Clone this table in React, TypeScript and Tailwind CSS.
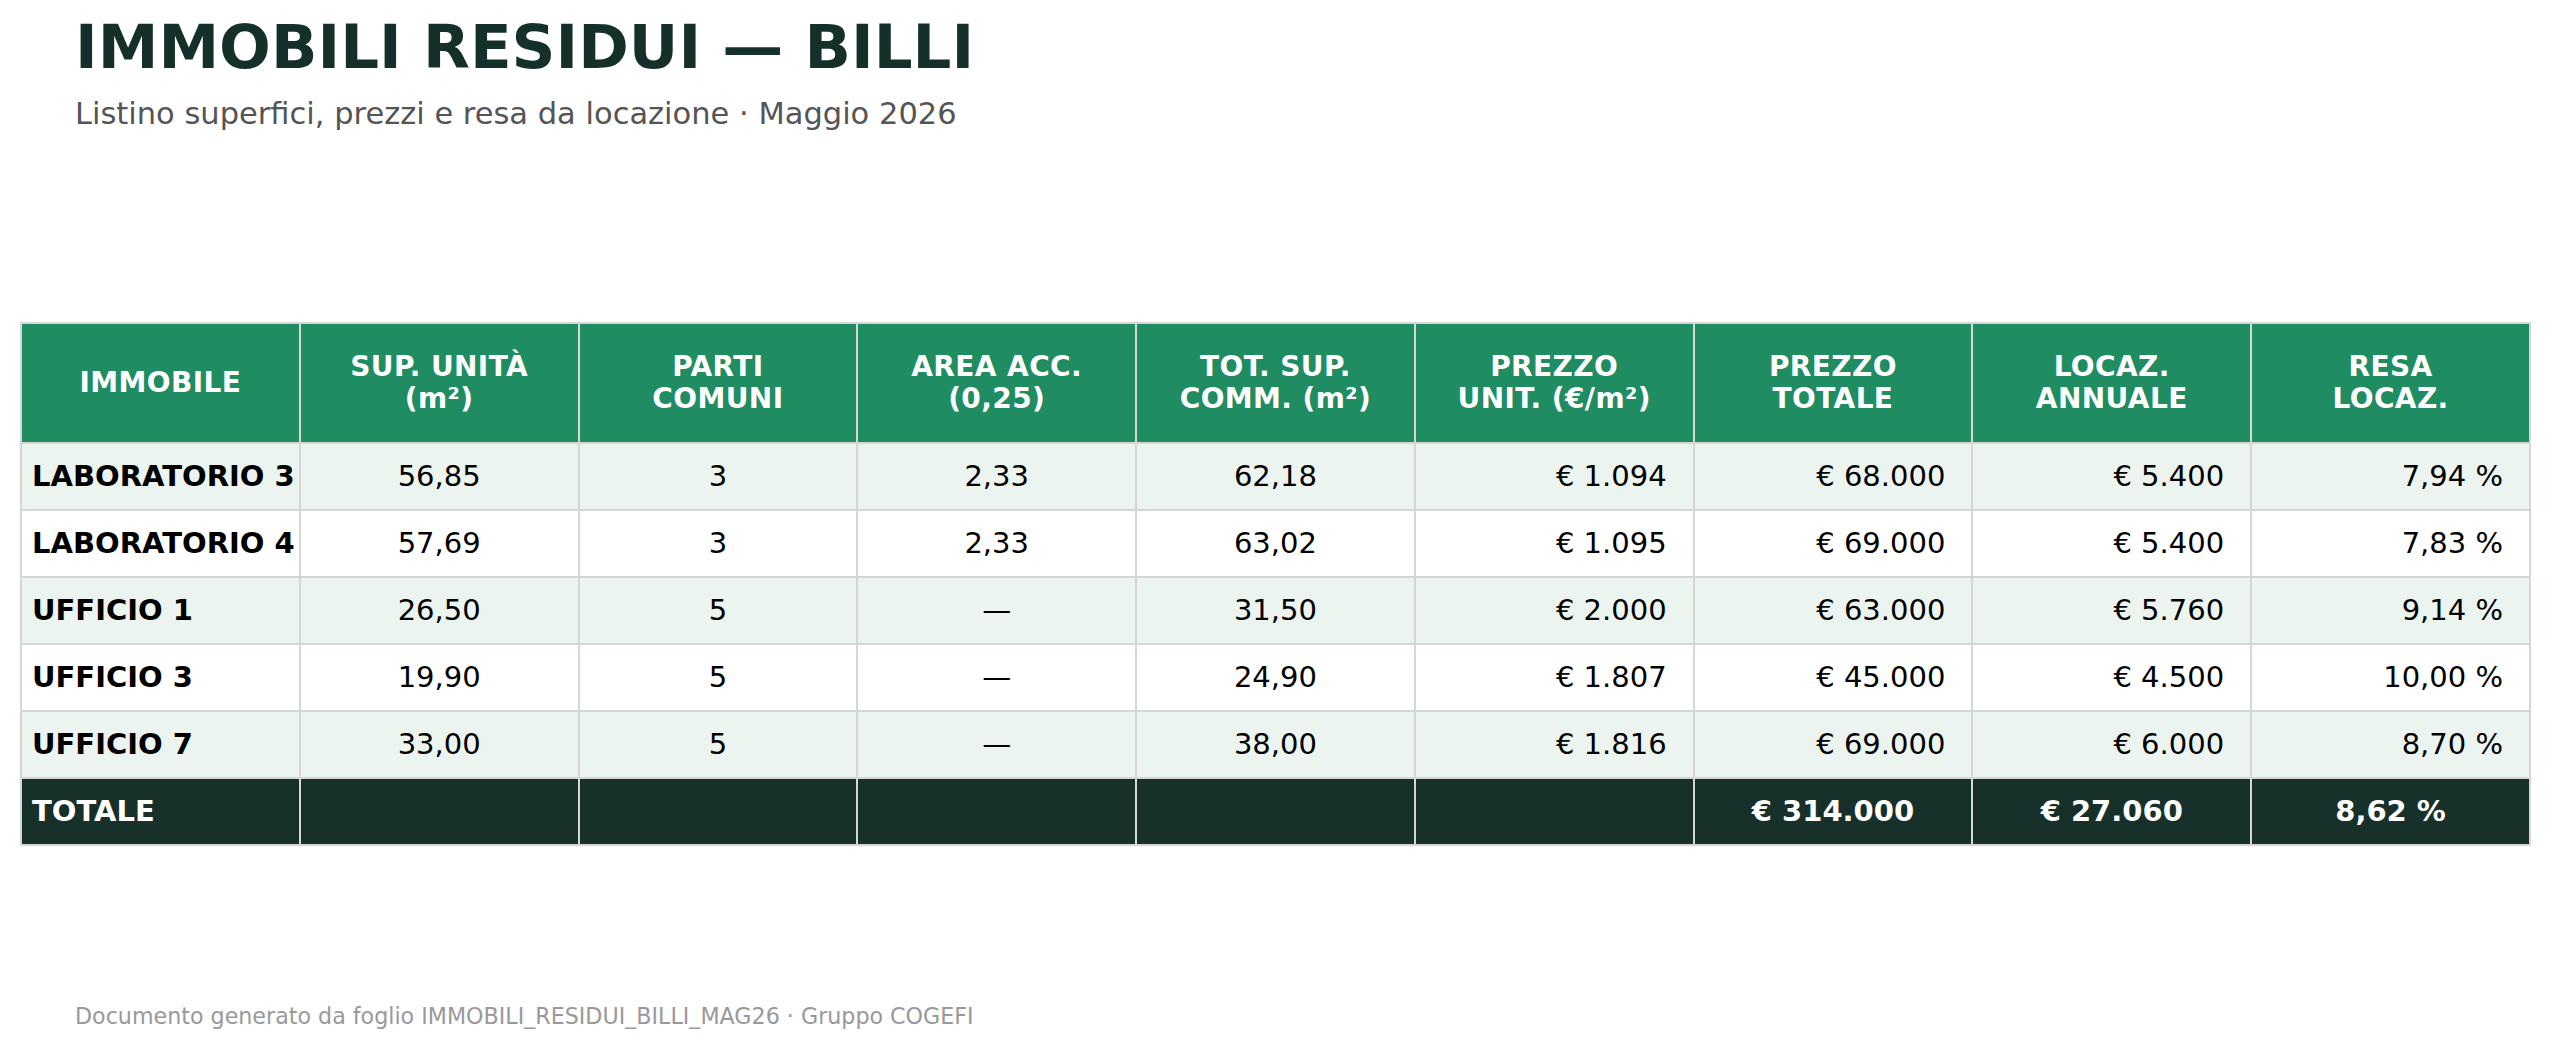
const headers: string[][] = [
  ["IMMOBILE"],
  ["SUP. UNITÀ", "(m²)"],
  ["PARTI", "COMUNI"],
  ["AREA ACC.", "(0,25)"],
  ["TOT. SUP.", "COMM. (m²)"],
  ["PREZZO", "UNIT. (€/m²)"],
  ["PREZZO", "TOTALE"],
  ["LOCAZ.", "ANNUALE"],
  ["RESA", "LOCAZ."],
];

const rows: string[][] = [
  ["LABORATORIO 3", "56,85", "3", "2,33", "62,18", "€ 1.094", "€ 68.000", "€ 5.400", "7,94 %"],
  ["LABORATORIO 4", "57,69", "3", "2,33", "63,02", "€ 1.095", "€ 69.000", "€ 5.400", "7,83 %"],
  ["UFFICIO 1", "26,50", "5", "—", "31,50", "€ 2.000", "€ 63.000", "€ 5.760", "9,14 %"],
  ["UFFICIO 3", "19,90", "5", "—", "24,90", "€ 1.807", "€ 45.000", "€ 4.500", "10,00 %"],
  ["UFFICIO 7", "33,00", "5", "—", "38,00", "€ 1.816", "€ 69.000", "€ 6.000", "8,70 %"],
];

const totals = ["TOTALE", "", "", "", "", "", "€ 314.000", "€ 27.060", "8,62 %"];

// first col left, 2-5 centered, rest right
function align(i: number) {
  if (i === 0) return "text-left pl-[10px] font-bold";
  if (i < 5) return "text-center";
  return "text-right pr-[26px]";
}

export default function App() {
  return (
    <div className="min-h-screen bg-white font-['DejaVu_Sans',sans-serif] text-black">
      <div className="pl-[75px] pt-[16px]">
        <h1 className="text-[61px] font-bold leading-none text-[#15302a]">IMMOBILI RESIDUI — BILLI</h1>
        <p className="mt-[22px] text-[30.5px] leading-none text-[#555555]">
          Listino superfici, prezzi e resa da locazione · Maggio 2026
        </p>
      </div>

      <div className="mt-[192px] px-[20px]">
        <table className="w-full table-fixed border-collapse border-2 border-[#d6d6d6] text-[29px]">
          <thead>
            <tr className="h-[120px] bg-[#1f8c61]">
              {headers.map((h, i) => (
                <th
                  key={i}
                  className="border-2 border-[#d6d6d6] text-center text-[28px] font-bold leading-[32px] tracking-[0.4px] text-white"
                >
                  {h.map((line, j) => (
                    <div key={j}>{line}</div>
                  ))}
                </th>
              ))}
            </tr>
          </thead>
          <tbody>
            {rows.map((r, ri) => (
              <tr key={ri} className={`h-[67px] ${ri % 2 === 0 ? "bg-[#ecf4ef]" : "bg-white"}`}>
                {r.map((c, i) => (
                  <td key={i} className={`border-2 border-[#d6d6d6] leading-none ${align(i)}`}>
                    {c}
                  </td>
                ))}
              </tr>
            ))}
            <tr className="h-[67px] bg-[#17302a] font-bold text-white">
              {totals.map((c, i) => (
                <td
                  key={i}
                  className={`border-2 border-[#d6d6d6] leading-none ${i === 0 ? "pl-[10px] text-left" : "text-center"}`}
                >
                  {c}
                </td>
              ))}
            </tr>
          </tbody>
        </table>
      </div>

      <p className="mt-[159px] pl-[75px] text-[22.2px] leading-none text-[#999999]">
        Documento generato da foglio IMMOBILI_RESIDUI_BILLI_MAG26 · Gruppo COGEFI
      </p>
    </div>
  );
}
